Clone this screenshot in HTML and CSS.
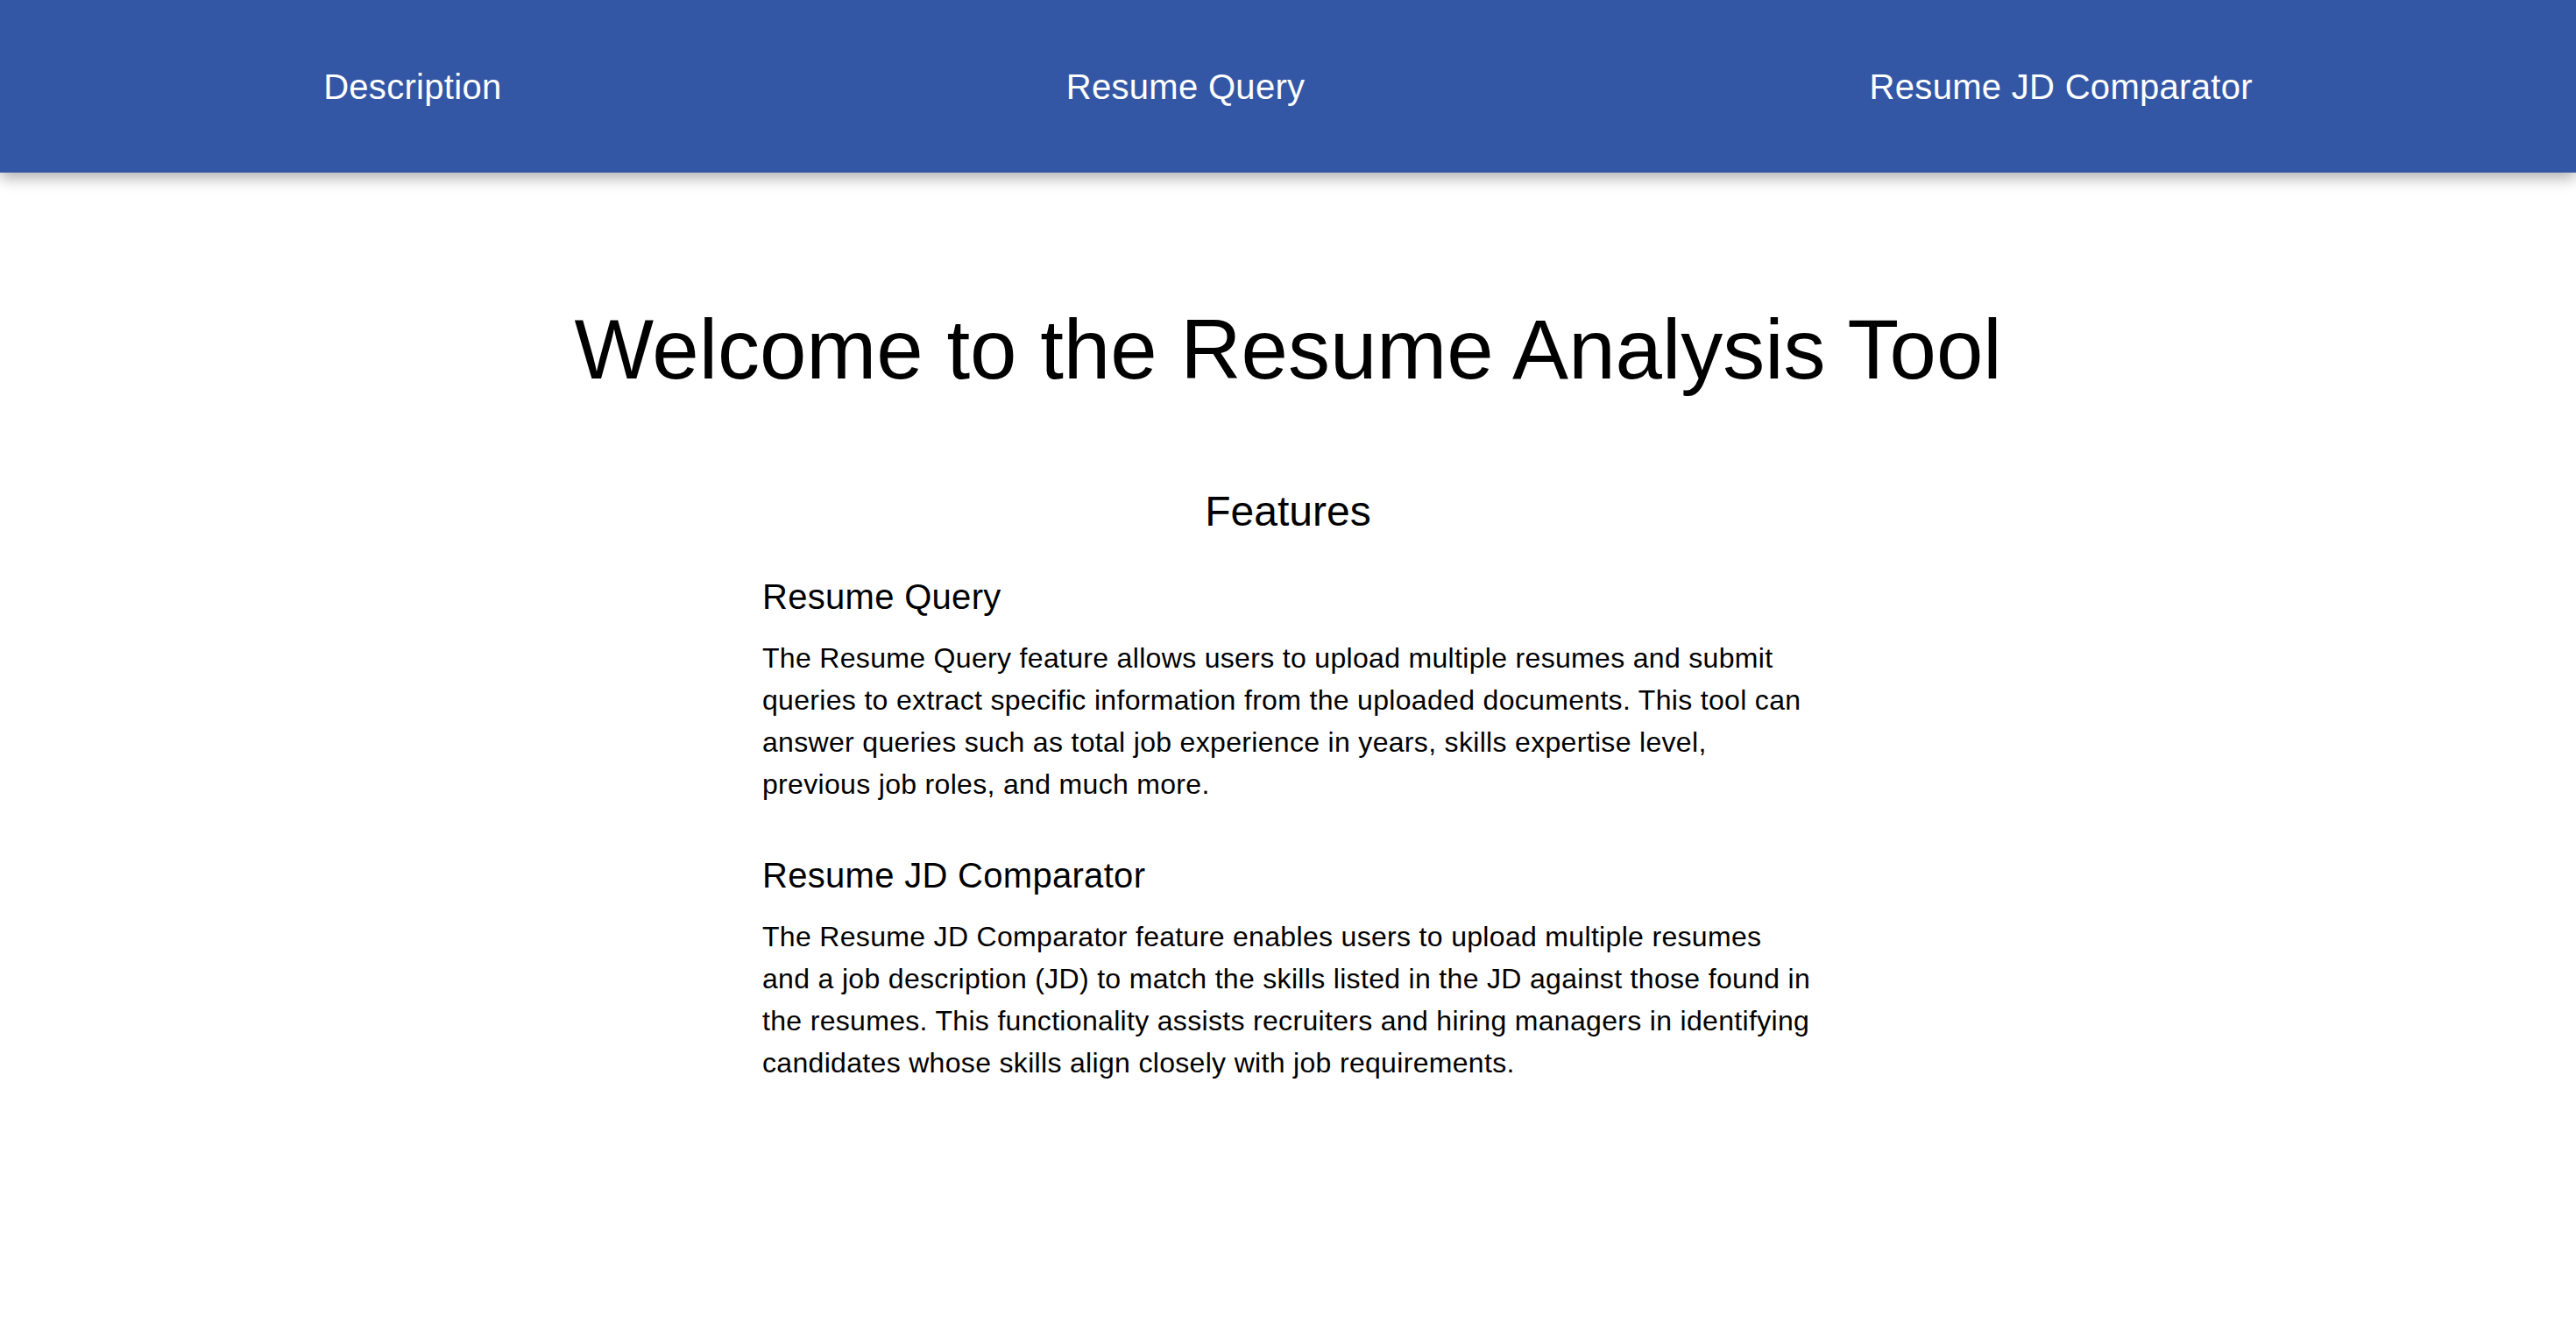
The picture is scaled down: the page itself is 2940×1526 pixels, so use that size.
FILE: index.html
```html
<!DOCTYPE html>
<html lang="en">
<head>
<meta charset="utf-8">
<title>Resume Analysis Tool</title>
<link rel="stylesheet" href="styles.css">
</head>
<body>
  <nav class="topnav">
    <a class="nav-link" href="#">Description</a>
    <a class="nav-link" href="#">Resume Query</a>
    <a class="nav-link" href="#">Resume JD Comparator</a>
  </nav>
  <main class="page">
    <h1 class="title">Welcome to the Resume Analysis Tool</h1>
    <section class="features">
      <h2 class="features-title">Features</h2>
      <div class="feature">
        <h3 class="feature-title">Resume Query</h3>
        <p class="feature-text">The Resume Query feature allows users to upload multiple resumes and submit queries to extract specific information from the uploaded documents. This tool can answer queries such as total job experience in years, skills expertise level, previous job roles, and much more.</p>
      </div>
      <div class="feature">
        <h3 class="feature-title">Resume JD Comparator</h3>
        <p class="feature-text">The Resume JD Comparator feature enables users to upload multiple resumes and a job description (JD) to match the skills listed in the JD against those found in the resumes. This functionality assists recruiters and hiring managers in identifying candidates whose skills align closely with job requirements.</p>
      </div>
    </section>
  </main>
</body>
</html>
```
FILE: styles.css
```css
html, body {
  margin: 0;
  padding: 0;
  background: #ffffff;
}

body {
  font-family: "Liberation Sans", Arial, Helvetica, sans-serif;
  color: #000000;
}

.topnav {
  height: 197px;
  box-sizing: border-box;
  padding: 0 47px;
  display: flex;
  align-items: center;
  justify-content: space-around;
  background: #3357a5;
  box-shadow: 0 6px 16px rgba(0, 0, 0, 0.32);
  position: relative;
  z-index: 1;
}

.nav-link {
  color: #ffffff;
  text-decoration: none;
  font-size: 40px;
  line-height: 46px;
  letter-spacing: 0.3px;
}

.page {
  display: flex;
  flex-direction: column;
  align-items: center;
  padding-top: 144px;
}

.title {
  margin: 0;
  font-size: 96px;
  font-weight: 400;
  line-height: 116px;
  text-align: center;
}

.features {
  width: 1200px;
  margin-top: 99px;
  display: flex;
  flex-direction: column;
  gap: 57px;
}

.features-title {
  margin: 0 0 -11px 0;
  font-size: 48px;
  font-weight: 400;
  line-height: 56px;
  text-align: center;
}

.feature {
  display: flex;
  flex-direction: column;
  gap: 23px;
}

.feature-title {
  margin: 0;
  font-size: 40px;
  font-weight: 400;
  line-height: 46px;
  letter-spacing: 0.3px;
}

.feature-text {
  margin: 0;
  font-size: 32px;
  line-height: 48px;
  letter-spacing: 0.32px;
}
```
